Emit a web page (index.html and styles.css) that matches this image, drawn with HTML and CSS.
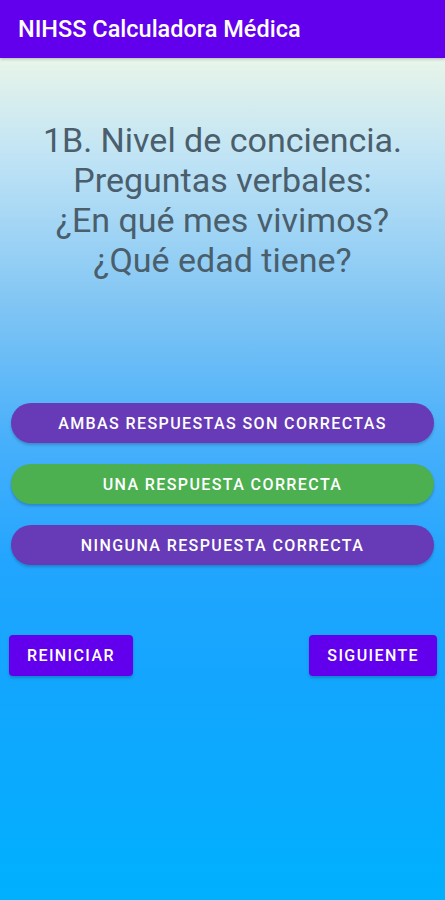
FILE: index.html
```html
<!DOCTYPE html>
<html lang="es">
<head>
  <meta charset="UTF-8">
  <meta name="viewport" content="width=device-width, initial-scale=1">
  <title>NIHSS Calculadora Médica</title>
  <link rel="stylesheet" href="styles.css">
</head>
<body>

  <header class="app-bar">
    <h1>NIHSS Calculadora Médica</h1>
  </header>

  <main class="screen">
    <p class="question">1B. Nivel de conciencia.<br>Preguntas verbales:<br>¿En qué mes vivimos?<br>¿Qué edad tiene?</p>

    <div class="answers">
      <button type="button" class="answer">Ambas respuestas son correctas</button>
      <button type="button" class="answer selected">Una respuesta correcta</button>
      <button type="button" class="answer">Ninguna respuesta correcta</button>
    </div>

    <div class="nav-buttons">
      <button type="button">Reiniciar</button>
      <button type="button">Siguiente</button>
    </div>
  </main>

</body>
</html>
```

FILE: styles.css
```css
body {
  margin: 0;
  font-family: Roboto, "Noto Sans", sans-serif;
  width: 445px;
  height: 900px;
  overflow: hidden;
}
.app-bar {
  background: #6200ee;
  height: 58px;
  display: flex;
  align-items: center;
  padding: 0 18px;
  box-shadow: 0 1px 3px rgba(0,0,0,0.25);
  position: relative;
}
.app-bar h1 {
  margin: 0;
  color: #fff;
  font-size: 23.5px;
  font-weight: 500;
}
.screen {
  height: 842px;
  box-sizing: border-box;
  background: linear-gradient(to bottom, #e8f5e9 0%, #bfe3f5 12%, #7ec4f4 30%, #49b0fb 45%, #22a5fe 60%, #12a6ff 75%, #00b0ff 100%);
  padding: 62px 11px 0;
}
.question {
  margin: 0;
  text-align: center;
  color: #4a5e6c;
  font-size: 34px;
  line-height: 40px;
}
.answers {
  margin-top: 123px;
  display: flex;
  flex-direction: column;
  gap: 21px;
}
.answer {
  height: 40px;
  border: none;
  border-radius: 20px;
  background: #673ab7;
  color: #fff;
  font-family: inherit;
  font-size: 16px;
  font-weight: 500;
  letter-spacing: 1.4px;
  text-transform: uppercase;
  box-shadow: 0 2px 3px rgba(0,0,0,0.2);
}
.answer.selected {
  background: #4caf50;
}
.nav-buttons {
  display: flex;
  justify-content: space-between;
  margin-top: 70px;
  margin-left: -2px;
  margin-right: -3px;
}
.nav-buttons button {
  height: 41px;
  padding: 0 18px;
  border: none;
  border-radius: 4px;
  background: #6200ee;
  color: #fff;
  font-family: inherit;
  font-size: 16px;
  font-weight: 500;
  letter-spacing: 1.4px;
  text-transform: uppercase;
  box-shadow: 0 2px 3px rgba(0,0,0,0.2);
}
```
